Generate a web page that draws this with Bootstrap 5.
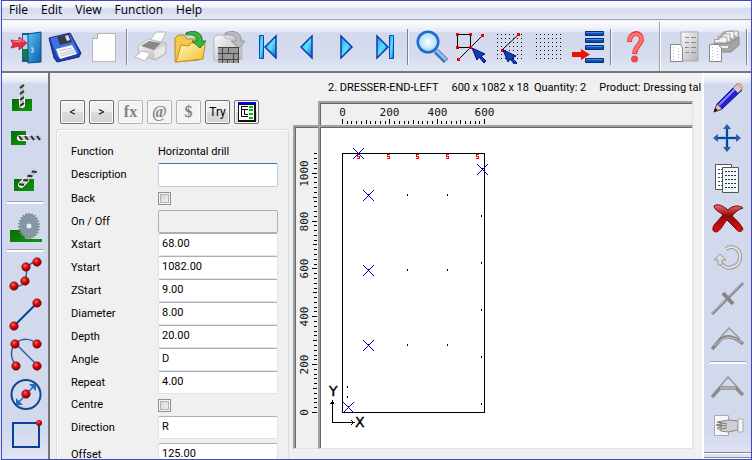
<!DOCTYPE html>
<html lang="en">
<head>
<meta charset="utf-8">
<meta name="viewport" content="width=device-width, initial-scale=1">
<title>Panel editor</title>
<link href="https://cdn.jsdelivr.net/npm/bootstrap@5.3.0/dist/css/bootstrap.min.css" rel="stylesheet">
<style>
body{font-family:Roboto,"Liberation Sans",sans-serif;font-size:11px;line-height:14px;color:#000;background:#dfe8f4;padding-left:1px}
.win{border:1px solid #4048c8;background:#f0f0f0}
.menus{font:12px/16px "Open Sans","Noto Sans",sans-serif;background:linear-gradient(#fff 0,#eef1f9 6px,#d5dbed 8px,#e3e8f6 100%);border-bottom:1px solid #a0a0a8;padding:1px 7px 0;gap:13px;height:19px}
.menus a{color:#000;text-decoration:none}
.tools{background:linear-gradient(#fafbfd 0,#e8ecf6 9px,#d3d9ec 11px,#d6dcee 70%,#e2e7f5 100%);border-top:2px solid #f4f6fa;border-bottom:2px solid #777;height:53px;padding-left:4px}
.tool{border:0;background:none;padding:0;width:39px;height:36px;flex:none;display:flex;align-items:center;justify-content:center}
.tool svg{display:block}
.vsep{width:8px;height:36px;flex:none;background:linear-gradient(90deg,#808288 0 1px,#f4f6fb 1px 2px) no-repeat 3px 0/2px 100%}
.vbreak{width:11px;height:49px;flex:none;background:linear-gradient(90deg,#a0a0a4 0 1px,#fff 1px 2px) no-repeat 5px 0/2px 100%}
.rail{width:48px;background:linear-gradient(#fafbfd 0,#e6eaf6 8px,#d3d9ec 11px,#d3d9ec 93%,#e0e6f5 100%);padding-top:5px}
.rail .tool{height:40px;width:46px}
.hsep{width:36px;height:8px;flex:none;background:linear-gradient(#a0a0a4 0 1px,#fff 1px 3px) no-repeat 0 3px/100% 3px}
.railL{border-right:2px solid #777}
.railR{border-left:2px solid #fff;width:49px}
.railend{height:7px;border-top:1px solid #888;border-bottom:1px solid #fff;box-shadow:inset 0 1px #fff,inset 0 -1px #888}
.mini{width:25px;height:24px;padding:0;border:1px solid #707070;border-radius:2px;background:linear-gradient(#f3f3f3,#ececec 50%,#dcdcdc 52%,#d2d2d2);box-shadow:inset 0 0 0 1px #fbfbfb;display:flex;align-items:center;justify-content:center;font-size:12px;color:#000}
.mini:disabled{border-color:#adb2b5;background:#f4f4f4;color:#838383;font:bold 16px/20px "Liberation Serif",serif}
.formcol{width:243px;padding:27px 4px 0 10px}
.group{border:1px solid #d5dfe5;border-bottom:0;border-radius:3px 3px 0 0;box-shadow:inset 1px 1px #fff;margin:5px 0 0 -4px;padding:11px 10px 0 14px;width:232px}
.frow{display:grid;grid-template-columns:87px 1fr;align-items:center;height:23px;flex:none}
.group{width:233px}
.frow.tall{height:24px}.frow.short{height:22px}
.frow input[type=text]{width:100%;height:100%;min-width:0;border:1px solid #e2e3ea;border-top-color:#abadb3;border-radius:2px;background:#fff;padding:0 3px 3px;outline:0;color:#000}
.frow input[type=text].hot{border-color:#b5cfe7;border-top-color:#3d7bad}
.frow input[type=text]:disabled{background:#f0f0f0;border-color:#afafaf}
.frow input[type=checkbox]{appearance:none;width:13px;height:13px;margin:0;border:1px solid #8e8f8f;box-shadow:inset 0 0 0 1px #f4f4f4,inset 0 0 0 2px #aeb3b9;background:linear-gradient(135deg,#cbcfd5,#f6f6f6)}
.heading{height:28px;padding:2px 0 0 35px;gap:5px;white-space:pre}
.board{display:grid;grid-template-columns:25px 1fr;grid-template-rows:24px 1fr;margin:0 9px 10px 0}
.sunk{border:2px solid #a0a0a0;border-right:1px solid #e3e3e3;border-bottom:1px solid #e3e3e3;box-shadow:inset 1px 1px #696969;padding:1px 0 0 1px;overflow:hidden;min-width:0;min-height:0}
.sunk svg{display:block;width:100%;height:100%}
.sunk.flush-b{border-bottom:0}.sunk.flush-r{border-right:0}
.num{font:11px "DejaVu Sans Mono",monospace;text-anchor:middle;fill:#111}
.axis{font:14px "DejaVu Sans",sans-serif;stroke:#000;stroke-width:.4px}
</style>
<script src="https://cdn.jsdelivr.net/npm/bootstrap@5.3.0/dist/js/bootstrap.bundle.min.js"></script>
</head>
<body class="vh-100 overflow-hidden">
<svg width="0" height="0" class="position-absolute" aria-hidden="true">
<defs>
<linearGradient id="cy" x1="0" y1="0" x2="1" y2="1"><stop offset="0" stop-color="#1899e8"/><stop offset=".5" stop-color="#5fe0ff"/><stop offset="1" stop-color="#0b63c8"/></linearGradient>
<linearGradient id="door" x1="0" y1="0" x2="1" y2="1"><stop offset="0" stop-color="#5bc0f4"/><stop offset="1" stop-color="#0a5ea8"/></linearGradient>
<linearGradient id="fold" x1="0" y1="0" x2="1" y2="1"><stop offset="0" stop-color="#fff6c0"/><stop offset="1" stop-color="#f2c02c"/></linearGradient>
<linearGradient id="gry" x1="0" y1="0" x2="1" y2="1"><stop offset="0" stop-color="#fafafa"/><stop offset="1" stop-color="#b4b4b4"/></linearGradient>
<linearGradient id="grn" x1="0" y1="0" x2="1" y2="1"><stop offset="0" stop-color="#0a6a0a"/><stop offset="1" stop-color="#0c980c"/></linearGradient>
<linearGradient id="redx" x1="0" y1="0" x2="0" y2="1"><stop offset="0" stop-color="#f07070"/><stop offset=".4" stop-color="#8a0d0d"/><stop offset="1" stop-color="#f00808"/></linearGradient>
<radialGradient id="ball" cx=".4" cy=".35" r=".6"><stop offset="0" stop-color="#ff6a5a"/><stop offset=".5" stop-color="#d01010"/><stop offset="1" stop-color="#8a0000"/></radialGradient>
<radialGradient id="lens"><stop offset="0" stop-color="#fff"/><stop offset="1" stop-color="#a8d8fa"/></radialGradient>
<pattern id="dots" width="4" height="4" patternUnits="userSpaceOnUse"><rect width="1" height="1" fill="#111"/></pattern>
<g id="bit"><path d="M0 14V21" stroke="#fff" stroke-width="6" stroke-linecap="round"/><path d="M0 0V22" stroke="#c4c4c4" stroke-width="4"/><path d="M-2 4L2 1M-2 10L2 7M-2 16L2 13M-2 22L2 19" stroke="#2c2c2c" stroke-width="2"/></g>
<g id="ptr"><path d="M0 0L5 12L7 9L12 15L14 13L9 8L13 6Z" fill="#0a44a8" stroke="#07078a" stroke-width="1"/></g>
<g id="bl"><circle r="4.300" fill="url(#ball)" stroke="#8a0808" stroke-width=".5"/></g>
</defs>
</svg>
<div class="win d-flex flex-column h-100">
<nav class="menus d-flex flex-shrink-0" aria-label="Menu"><a href="#">File</a><a href="#">Edit</a><a href="#">View</a><a href="#">Function</a><a href="#">Help</a></nav>

<div class="tools d-flex align-items-center flex-shrink-0 overflow-hidden" role="toolbar" aria-label="Main">
<button class="tool" aria-label="Exit"><svg width="34" height="34" viewBox="0 0 34 34"><path d="M13 3H32V32H13Z" fill="#1a5c98"/><path d="M14 5H20V20H14Z" fill="#a9d6f2"/><path d="M14 19H20V29H14Z" fill="#15803a"/><path d="M19 4L32 2V32L19 33Z" fill="url(#door)" stroke="#0d4c88"/><path d="M22 18h2v4h-2" fill="none" stroke="#d6f2ff"/><path d="M2 10L10 11V7L18 13L10 20V16L2 18L4 14Z" fill="#ea2848" stroke="#b8203a" stroke-width=".8"/><path d="M4 11L11 12V9L15 12" fill="none" stroke="#ff94a0"/></svg></button>
<button class="tool" aria-label="Save"><svg width="34" height="34" viewBox="0 0 34 34"><path d="M1 8L22 3L33 23L31 27L9 32L6 28Z" fill="#1b3fae" stroke="#16277c"/><path d="M2 8L22 4L31 23L10 28Z" fill="#3c73e0"/><path d="M9 7L21 4L24 12L12 15Z" fill="#363c4a"/><path d="M17 6L20 5L22 10L19 11Z" fill="#d8dce8"/><path d="M8 19L24 15L29 24L12 29Z" fill="#f8f8fb"/><path d="M11 21L24 18M12 24L26 20M13 26L27 22" stroke="#b4bccf"/></svg></button>
<button class="tool" aria-label="New"><svg width="34" height="34" viewBox="0 0 34 34"><path d="M10 3.500H28.500V31.500H5.500V8Z" fill="#fdfdfd" stroke="#b8b8b8"/><path d="M10.500 4V8.500H6" fill="#ddd" stroke="#aaa"/></svg></button>
<span class="vsep"></span>
<button class="tool" aria-label="Print"><svg width="34" height="34" viewBox="0 0 34 34"><path d="M15 12L22 2H32L26 15Z" fill="#fbfbfb" stroke="#bbb"/><path d="M4 16L14 9L32 13V23L22 30L5 26Z" fill="url(#gry)" stroke="#bbb"/><path d="M7 16L15 11L27 13L20 20Z" fill="#888"/><path d="M20 21L31 15V23L21 29Z" fill="#e8e8e8"/><path d="M1 27L8 21L16 23L11 31Z" fill="#fff" stroke="#bbb"/></svg></button>
<button class="tool" aria-label="Open"><svg width="34" height="34" viewBox="0 0 34 34"><path d="M2 32V8L5 5H11L14 9H26V30Z" fill="#f1c94c" stroke="#b8892a"/><path d="M3 32L8 15L16 16L18 13L32 14L30 29Z" fill="url(#fold)" stroke="#c09020"/><path d="M13 3C22-1 30 3 29 11H33L27 18L19 11H24C24 6 20 4 13 5Z" fill="#35b83a" stroke="#17801e"/></svg></button>
<button class="tool" aria-label="Open panel"><svg width="34" height="34" viewBox="0 0 34 34"><path d="M2 31V8L5 5H11L14 9H30V29Z" fill="url(#gry)" stroke="#b8b8b8"/><path d="M13 3C22-1 30 3 29 11H33L27 18L19 11H24C24 6 20 4 13 5Z" fill="#bbb" stroke="#999"/><path d="M6 17H27V33H6Z" fill="#999"/><path d="M6 17.500H27M6 23.500H27M6 29.500H27M10.500 17V33M16.500 17V24M21.500 23V33M15.500 29V33M26.500 17V33" stroke="#444"/></svg></button>
<button class="tool" aria-label="First"><svg width="34" height="34" viewBox="0 0 34 34"><path d="M8.500 5.500H12.500V28.500H8.500Z" fill="url(#cy)" stroke="#0a48c0"/><path d="M25 6V28L14 17Z" fill="url(#cy)" stroke="#083db0" stroke-width="1.500"/></svg></button>
<button class="tool" aria-label="Previous"><svg width="34" height="34" viewBox="0 0 34 34"><path d="M22 6V28L11 17Z" fill="url(#cy)" stroke="#083db0" stroke-width="1.500"/></svg></button>
<button class="tool" aria-label="Next"><svg width="34" height="34" viewBox="0 0 34 34"><path d="M12 6V28L23 17Z" fill="url(#cy)" stroke="#083db0" stroke-width="1.500"/></svg></button>
<button class="tool" aria-label="Last"><svg width="34" height="34" viewBox="0 0 34 34"><path d="M9 6V28L20 17Z" fill="url(#cy)" stroke="#083db0" stroke-width="1.500"/><path d="M21.500 5.500H25.500V28.500H21.500Z" fill="url(#cy)" stroke="#0a48c0"/></svg></button>
<span class="vsep"></span>
<button class="tool" aria-label="Zoom"><svg width="34" height="34" viewBox="0 0 34 34"><path d="M21 21L31 31" stroke="#3d6ea8" stroke-width="6"/><path d="M21 20L31 30" stroke="#8fc2ee" stroke-width="3"/><circle cx="13" cy="12" r="10" fill="url(#lens)" stroke="#1a6ad0" stroke-width="3"/><circle cx="13" cy="12" r="8.500" fill="none" stroke="#b5d6f5"/></svg></button>
<button class="tool" aria-label="Select shape"><svg width="34" height="34" viewBox="0 0 34 34"><path d="M3.500 4.500H16.500V17.500H3.500ZM4 30L29 5" fill="none" stroke="#000"/><path d="M2 3h3v3H2zM15 3h3v3h-3zM2 16h3v3H2zM15 16h3v3h-3zM3 28h3v3H3zM27 4h3v3h-3z" fill="#e00"/><use href="#ptr" x="18" y="18"/></svg></button>
<button class="tool" aria-label="Snap to grid"><svg width="34" height="34" viewBox="0 0 34 34"><path d="M4 4H30V31H4Z" fill="url(#dots)"/><path d="M9 20L26 4" stroke="#000"/><path d="M24 3h3v3h-3zM8 19h3v3H8z" fill="#e00"/><use href="#ptr" x="10" y="20"/></svg></button>
<button class="tool" aria-label="Grid"><svg width="34" height="34" viewBox="0 0 34 34"><path d="M4 4H31V31H4Z" fill="url(#dots)"/></svg></button>
<button class="tool" aria-label="Layer list"><svg width="34" height="34" viewBox="0 0 34 34"><path d="M14.500 1.500H32.500V5.500H14.500ZM14.500 8.500H32.500V12.500H14.500ZM14.500 15.500H32.500V19.500H14.500ZM14.500 28.500H32.500V32.500H14.500Z" fill="#0850b8" stroke="#062c74"/><path d="M15 2.500H32M15 9.500H32M15 16.500H32M15 29.500H32" stroke="#3d8af0"/><path d="M1 22H10V19L19 24.500L10 30V27H1Z" fill="#f01000"/></svg></button>
<span class="vsep"></span>
<button class="tool" aria-label="Help"><svg width="34" height="34" viewBox="0 0 34 34"><path d="M11.500 12C11.500 1 24 1 23.500 10C23 15 17 16 16.500 24" fill="none" stroke="#e83c40" stroke-width="5"/><path d="M11.500 11C12 2 24 2 23.500 10C23 15 17 16 16.500 23" fill="none" stroke="#ff7272" stroke-width="3"/><circle cx="16.500" cy="29" r="3.500" fill="#f04a4a"/></svg></button>
<span class="vbreak"></span>
<button class="tool" aria-label="Report"><svg width="34" height="34" viewBox="0 0 34 34"><path d="M13 2H30V31H13Z" fill="url(#gry)" stroke="#aaa"/><path d="M17 7.500h4M23 7.500h5M17 12.500h4M23 12.500h5M17 17.500h4M23 17.500h5M17 22.500h4M23 22.500h5" stroke="#888"/><path d="M2.500 14.500H12L14.500 17V31.500H2.500Z" fill="#fff" stroke="#888"/><path d="M5.500 17V30M10.500 18V30" stroke="#bbb" stroke-dasharray="1 2"/></svg></button>
<button class="tool" aria-label="Card file"><svg width="34" height="34" viewBox="0 0 34 34"><path d="M7 12L17 1H32V14L24 22H7Z" fill="#aaa"/><path d="M7.500 9.500H12L14 7H20V15H7.500ZM10.500 6.500H15L17 4H23V12M14.500 3.500H18L20 1.500H27V9M20 1H31V7" fill="#f2f2f2" stroke="#a5a5a5"/><path d="M7 13H23L32 7V15L24 22H7Z" fill="#a4a4a4" stroke="#888"/><path d="M11 16H21V18H11Z" fill="#eee"/><path d="M2.500 14.500H11L14.500 18V31.500H2.500Z" fill="#fff" stroke="#888"/><path d="M5.500 17V30M10.500 18V30" stroke="#bbb" stroke-dasharray="1 2"/></svg></button>
<span class="vsep"></span>
</div>

<div class="d-flex flex-grow-1 overflow-hidden">
<div class="rail railL d-flex flex-column align-items-center flex-shrink-0" role="toolbar" aria-label="Machining">
<button class="tool" aria-label="Vertical drill"><svg width="34" height="34" viewBox="0 0 34 34"><path d="M4 18H24V30H4Z" fill="url(#grn)"/><use href="#bit" x="14" y="3"/></svg></button>
<button class="tool" aria-label="Horizontal drill"><svg width="34" height="34" viewBox="0 0 34 34"><path d="M3 10H18V24H3Z" fill="url(#grn)"/><use href="#bit" transform="translate(33 17) rotate(90)"/></svg></button>
<button class="tool" aria-label="Angled drill"><svg width="34" height="34" viewBox="0 0 34 34"><path d="M6 18H26V30H6Z" fill="url(#grn)"/><use href="#bit" transform="translate(28 9) rotate(45)"/></svg></button>
<span class="hsep"></span>
<button class="tool" aria-label="Saw"><svg width="34" height="34" viewBox="0 0 34 34"><path d="M2 21H14L18 30H34V33H2Z" fill="url(#grn)"/><ellipse cx="21" cy="17" rx="9.500" ry="12" fill="#8497a2"/><ellipse cx="21" cy="17" rx="10" ry="12" fill="none" stroke="#73858f" stroke-width="2" stroke-dasharray="1.500 1.500"/><circle cx="21" cy="17" r="2.500" fill="#e8eef2"/></svg></button>
<span class="hsep"></span>
<button class="tool" aria-label="Polyline"><svg width="34" height="34" viewBox="0 0 34 34"><path d="M6 29C11 30 15 28 17 24C18 19 19 15 19 10C22 6 25 5 30 5" fill="none" stroke="#2a62a8" stroke-width="1.500"/><use href="#bl" x="6" y="29"/><use href="#bl" x="17" y="24"/><use href="#bl" x="18" y="10"/><use href="#bl" x="29" y="5"/></svg></button>
<button class="tool" aria-label="Line"><svg width="34" height="34" viewBox="0 0 34 34"><path d="M6 29L29 6" stroke="#0a3f98" stroke-width="2"/><use href="#bl" x="6" y="29"/><use href="#bl" x="29" y="6"/></svg></button>
<button class="tool" aria-label="Arc"><svg width="34" height="34" viewBox="0 0 34 34"><path d="M8 28C1 20 3 10 8 6C14 1 23 1 29 7M8 7L29 28" fill="none" stroke="#2a62a8" stroke-width="1.500"/><use href="#bl" x="7" y="7"/><use href="#bl" x="29" y="7"/><use href="#bl" x="8" y="29"/><use href="#bl" x="29" y="29"/></svg></button>
<button class="tool" aria-label="Circle"><svg width="34" height="34" viewBox="0 0 34 34"><circle cx="18" cy="17.500" r="14.500" fill="none" stroke="#0c4894" stroke-width="2"/><path d="M9 27L27 8" stroke="#2a6ab0" stroke-width="1.500"/><path d="M8 21V28H15ZM21 7H28V14Z" fill="#2a6ab0"/><use href="#bl" x="18" y="17"/></svg></button>
<button class="tool" aria-label="Rectangle"><svg width="34" height="34" viewBox="0 0 34 34"><path d="M5 6H31V30H5Z" fill="none" stroke="#0a3f98" stroke-width="2"/><circle cx="31" cy="6" r="3" fill="url(#ball)"/></svg></button>
</div>

<main class="d-flex flex-grow-1 overflow-hidden">
<section class="formcol flex-shrink-0 d-flex flex-column">
<div class="d-flex gap-1 flex-shrink-0">
<button class="mini">&lt;</button><button class="mini">&gt;</button><button class="mini" disabled>fx</button><button class="mini" disabled>@</button><button class="mini" disabled>$</button><button class="mini">Try</button>
<button class="mini" aria-label="Tree"><svg width="18" height="20" viewBox="0 0 18 20"><path d="M0 0H18V20H0Z" fill="#111"/><path d="M1 3H16V18H1Z" fill="#fff"/><path d="M0 0H18V2H0Z" fill="#00f"/><path d="M3.500 4V14.500H10M3.500 4.500H10M3.500 7.500H10M6.500 8V12.500H10" fill="none" stroke="#000"/><path d="M11 4h4v2h-4zM11 7h4v2h-4zM11 11h4v2h-4zM11 15h4v2h-4z" fill="#00c400"/></svg></button>
</div>
<form class="group flex-grow-1 d-flex flex-column">
<div class="frow short"><span>Function</span><span>Horizontal drill</span></div>
<div class="frow tall"><label for="desc">Description</label><input type="text" class="hot" id="desc"></div>
<div class="frow"><label for="back">Back</label><input type="checkbox" id="back"></div>
<div class="frow"><label for="onoff">On / Off</label><input type="text" id="onoff" disabled></div>
<div class="frow"><label for="xs">Xstart</label><input type="text" id="xs" value="68.00"></div>
<div class="frow"><label for="ys">Ystart</label><input type="text" id="ys" value="1082.00"></div>
<div class="frow"><label for="zs">ZStart</label><input type="text" id="zs" value="9.00"></div>
<div class="frow"><label for="dia">Diameter</label><input type="text" id="dia" value="8.00"></div>
<div class="frow"><label for="dep">Depth</label><input type="text" id="dep" value="20.00"></div>
<div class="frow"><label for="ang">Angle</label><input type="text" id="ang" value="D"></div>
<div class="frow"><label for="rep">Repeat</label><input type="text" id="rep" value="4.00"></div>
<div class="frow short"><label for="cen">Centre</label><input type="checkbox" id="cen"></div>
<div class="frow"><label for="dir">Direction</label><input type="text" id="dir" value="R"></div>
<div class="frow mt-1"><label for="off">Offset</label><input type="text" id="off" value="125.00"></div>
</form>
</section>

<section class="flex-grow-1 d-flex flex-column overflow-hidden">
<div class="heading d-flex align-items-center flex-shrink-0 overflow-hidden"><span class="me-2">2. DRESSER-END-LEFT</span><span>600 x 1082 x 18</span><span>Quantity: 2</span><span class="ps-2">Product: Dressing tal</span></div>
<div class="board flex-grow-1 overflow-hidden">
<span></span>
<div class="sunk flush-b"><svg id="rulerX" aria-label="Horizontal ruler"></svg></div>
<div class="sunk flush-r"><svg id="rulerY" aria-label="Vertical ruler"></svg></div>
<div class="sunk bg-white"><svg id="plan" aria-label="Panel drawing" shape-rendering="crispEdges">
<rect x="21.500" y="25.500" width="142" height="259" fill="none" stroke="#000"/>
<path id="dotsPath" stroke="#000"/><path id="redPath" stroke="#f00" fill="none"/><path id="crossPath" stroke="#00c" fill="none"/>
<path d="M11.500 273V294.500H33M9.500 276.500L11.500 273L13.500 276.500M30 292.500L33 294.500L30 296.500" fill="none" stroke="#000"/>
<text class="axis" x="8" y="268">Y</text><text class="axis" x="34" y="299">X</text>
</svg></div>
</div>
</section>
</main>

<div class="rail railR d-flex flex-column align-items-center flex-shrink-0" role="toolbar" aria-label="Editing">
<button class="tool" aria-label="Edit"><svg width="34" height="34" viewBox="0 0 34 34"><path d="M3 31L6 23L25 4L31 9L11 28Z" fill="#2420d8" stroke="#15108a"/><path d="M8 24L26 6" stroke="#8f8cff" stroke-width="2"/><path d="M3 31L6 23L11 28Z" fill="#e8c69a" stroke="#333" stroke-width=".5"/><path d="M3 31L4 27L7 29Z" fill="#111"/><path d="M22 7L26 3L31 8L27 12Z" fill="#ccc" stroke="#777"/><path d="M26 3C29 1 33 5 31 8Z" fill="#f4b8a0" stroke="#d08a70"/></svg></button>
<button class="tool" aria-label="Move"><svg width="34" height="34" viewBox="0 0 34 34"><path d="M16 5V29M4 17H28" stroke="#86d4f0" stroke-width="4"/><path d="M16 5V29M4 17H28" stroke="#1a3f94" stroke-width="2"/><path d="M16 3L12 8H20ZM16 31L12 26H20ZM2 17L7 13V21ZM30 17L25 13V21Z" fill="#2a5ca8"/></svg></button>
<button class="tool" aria-label="Copy"><svg width="34" height="34" viewBox="0 0 34 34"><path d="M4.500 3.500H20.500V28.500H4.500Z" fill="#fff" stroke="#555"/><path d="M7 8.500H13M7 12.500H12M7 16.500H12M7 20.500H12M7 24.500H12" stroke="#444" stroke-dasharray="2 1"/><path d="M11.500 6.500H27.500V31.500H11.500Z" fill="#eef9fc" stroke="#555"/><path d="M14 10.500H25M14 14.500H25M14 18.500H25M14 22.500H25M14 26.500H25" stroke="#333" stroke-dasharray="2 1"/></svg></button>
<button class="tool" aria-label="Delete"><svg width="34" height="34" viewBox="0 0 34 34"><path d="M3 5C7 2 12 5 17 9C22 4 28 4 32 7C28 8 24 11 21 15C26 19 30 24 32 28C30 32 27 31 24 27L16 19C12 23 10 30 5 31C1 31 1 26 4 23L12 14C9 11 4 10 3 5Z" fill="url(#redx)" stroke="#6c0808"/></svg></button>
<button class="tool" aria-label="Rotate"><svg width="34" height="34" viewBox="0 0 34 34"><path d="M15 8C22 3 30 9 29 17C28 27 15 30 10 22" fill="none" stroke="#999" stroke-width="4"/><path d="M15 8C22 3 30 9 29 17C28 27 15 30 10 22" fill="none" stroke="#e4e4e4" stroke-width="2"/><path d="M3 19L9 13L15 19H11V24H7V19Z" fill="#ddd" stroke="#999"/></svg></button>
<button class="tool" aria-label="Trim"><svg width="34" height="34" viewBox="0 0 34 34"><path d="M1 33L32 2" stroke="#8c8c8c" stroke-width="3"/><path d="M1 32L31 2" stroke="#bbb"/><path d="M12 12L22 23" stroke="#858585" stroke-width="4"/></svg></button>
<button class="tool" aria-label="Fillet"><svg width="34" height="34" viewBox="0 0 34 34"><path d="M8 18L18 7L29 18" fill="none" stroke="#999" stroke-width="1.500"/><path d="M1 28L9 19C15 14 22 14 32 23" fill="none" stroke="#858585" stroke-width="3.500"/><path d="M3 25L10 19C16 15 22 15 31 22" fill="none" stroke="#ccc"/></svg></button>
<span class="hsep"></span>
<button class="tool" aria-label="Chamfer"><svg width="34" height="34" viewBox="0 0 34 34"><path d="M7 20L17 8L28 20" fill="none" stroke="#999" stroke-width="1.500"/><path d="M1 28L9 19H25L32 26" fill="none" stroke="#8c8c8c" stroke-width="3.500"/><path d="M9 19H25" stroke="#ccc"/></svg></button>
<button class="tool" aria-label="Properties"><svg width="34" height="34" viewBox="0 0 34 34"><path d="M3.500 6.500H17.500V26.500H3.500Z" fill="#f8f8f8" stroke="#aaa"/><path d="M6 13L18 11L27 12V21L17 23L10 22L6 19L11 18L5 16L11 15Z" fill="#d0d0d0" stroke="#888"/><path d="M7 13L16 15M6 16L16 17M9 20L16 19" stroke="#777"/><path d="M27 10H32V23H27Z" fill="#f5f5f5" stroke="#aaa"/></svg></button>
<div class="railend mt-auto w-100"></div>
</div>
</div>
</div>
<script>
// Screen pixels per millimetre of panel
const SX = 142 / 600, SY = 259 / 1082;
const size = v => v % 200 === 0 ? 5 : v % 100 === 0 ? 4 : 3;
let d = '', t = '';
for (let v = 0; v <= 600; v += 20) {
  const x = Math.round(21 + v * SX) + .5;
  d += `M${x} 20V${20 - size(v)}`;
  if (v % 200 === 0) t += `<text class="num" x="${x}" y="12">${v}</text>`;
}
rulerX.innerHTML = `<path d="${d}" stroke="#000"/>${t}`;
d = t = '';
for (let v = 0; v <= 1080; v += 20) {
  const y = Math.round(284 - v * SY) + .5;
  d += `M21 ${y}H${21 - size(v)}`;
  if (v % 200 === 0) t += `<text class="num" transform="translate(12 ${y}) rotate(-90)">${v}</text>`;
}
rulerY.innerHTML = `<path d="${d}" stroke="#000"/>${t}`;
const holes = [[26,259],[26,269],[27,279],[160,88],[160,135],[160,182],[160,229],[160,276],[161,41]];
for (const y of [67, 142, 217]) for (const x of [47, 86, 126]) holes.push([x, y]);
dotsPath.setAttribute('d', holes.map(([x, y]) => `M${x + .5} ${y - 1}v2`).join(''));
redPath.setAttribute('d', [37,67,96,126,156].map(x => `M${x + 2} 26.5h-3v2h2v2h-2`).join(''));
crossPath.setAttribute('d', [[37,25],[161,41],[47,67],[47,142],[47,217],[27,279]].map(([x, y]) => `M${x - 5} ${y - 5}l11 11m0 -11l-11 11`).join(''));
</script>
</body>
</html>
